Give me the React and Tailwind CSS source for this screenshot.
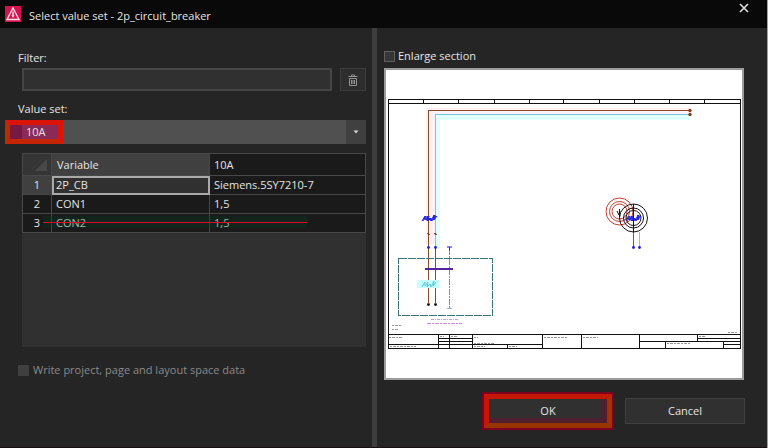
import { useState } from "react";

const variables = [
  { name: "2P_CB", value: "Siemens.5SY7210-7" },
  { name: "CON1", value: "1,5" },
  { name: "CON2", value: "1,5" },
];

const AppIcon = () => (
  <svg viewBox="0 0 16 16" className="h-4 w-4 shrink-0" aria-hidden="true">
    <rect width="16" height="16" fill="#d3134f" />
    <path d="M8 2 L14 13.5 H2 Z" fill="none" stroke="#fbd9e3" strokeWidth="1.4" />
    <path d="M8 5.5 V9.5" fill="none" stroke="#fbd9e3" strokeWidth="1.4" />
    <path d="M6.500 9 H9.500 L8 12 Z" fill="#fbd9e3" />
  </svg>
);

const TrashIcon = () => (
  <svg viewBox="0 0 12 12" className="h-3 w-3" fill="none" stroke="#929292" aria-hidden="true">
    <path d="M1.5 2.5 H10.5 M4.5 2.5 V1 H7.5 V2.5 M2.5 4.5 V11.5 H9.5 V4.5 M2.5 4.5 H9.5 M4.5 6 V10 M6 6 V10 M7.5 6 V10" />
  </svg>
);

const Contacts = ({ x, y, color }) => (
  <path
    d={`M${x} ${y + 3} l3 -5 l0 4 l3 -4 l-1 5 l3 -3 l1 3 l3 -6 l-1 5 l3 -4`}
    fill="none"
    stroke={color}
    strokeWidth="1"
  />
);

// Circuit plan, drawn in sheet coordinates
const Schematic = () => (
  <svg viewBox="386 70 356 308" className="block w-full" role="img" aria-label="Circuit diagram preview">
    <rect x="386" y="70" width="356" height="308" fill="#fff" />

    <path d="M426 108 H691 V115 H436 V244 H426 Z" fill="#fff0f8" />
    <path d="M436 115 H690 V120 H440 V248 H436 Z" fill="#e2ffff" />

    <g fill="none" stroke="#111" strokeWidth="1" shapeRendering="crispEdges">
      <path d="M388.500 99.500 H740.500 V348.500 H388.500 Z M388.500 103.500 H740.500" />
      <path d="M423.500 99 V103 M458.500 99 V103 M494.500 99 V103 M529.500 99 V103 M563.500 99 V103 M599.500 99 V103 M634.500 99 V103 M669.500 99 V103 M704.500 99 V103" />
      <path d="M388 334.500 H740 M388 344.500 H542 M438.500 334 V348 M449.500 334 V348 M472.500 334 V348 M542.500 334 V348 M581.500 334 V348 M639.500 334 V348 M507.500 344 V348" />
      <path d="M438 338.500 H472 M438 341.500 H472 M639 341.500 H740 M665.500 341 V348 M697.500 334 V341 M697 338.500 H740 M723.500 341 V348 M723 344.500 H740" />
    </g>

    <g fill="none" shapeRendering="crispEdges">
      <path d="M428.500 304 V110.500 H690" stroke="#8a4a22" />
      <path d="M435.500 248 V114.500 H690" stroke="#78c8dc" />
      <path d="M435.500 246 V304" stroke="#8a4a22" />
      <path d="M449.500 249 V308" stroke="#6ab42a" strokeDasharray="6 1 2 1" />
      <rect x="398.500" y="258.500" width="94" height="57" stroke="#37737a" strokeDasharray="8 1" />
      <path d="M425 268.500 H453" stroke="#5522a0" strokeWidth="2" />
      <path d="M633.500 230 V247" stroke="#8a5a22" />
      <path d="M639.500 232 V247" stroke="#c9a2ee" />
    </g>
    <g fill="#8a3a10">
      <circle cx="690" cy="110.500" r="1.700" />
      <circle cx="690" cy="114.500" r="1.700" />
      <path d="M427 233 h2 l1 2 h-2 z M434 233 h2 l1 2 h-2 z" />
    </g>
    <g fill="#1a1ae0">
      <circle cx="428.500" cy="247.500" r="1.400" />
      <circle cx="435.500" cy="247.500" r="1.400" />
      <path d="M447 246.500 h5 v1 h-2 v3 h-1 v-3 h-2 z" />
      <circle cx="633.500" cy="247.500" r="1.400" />
      <circle cx="639.500" cy="247.500" r="1.400" />
    </g>
    <g fill="#111">
      <circle cx="428.500" cy="304.500" r="1.400" />
      <circle cx="435.500" cy="304.500" r="1.400" />
    </g>
    <rect x="417" y="280" width="22" height="8" fill="#c8ffff" />
    <path d="M428.500 288 V304 M435.500 288 V304" stroke="#8a4a22" shapeRendering="crispEdges" />
    <Contacts x={422} y={218} color="#2222dd" />
    <Contacts x={423} y={218} color="#2222dd" />
    <Contacts x={422} y={284} color="#55c9ea" />
    <path d="M447 308.500 h5" stroke="#8fb0f5" />

    <g fill="none" stroke="#c43a30">
      <circle cx="619.500" cy="211.500" r="13.500" />
      <circle cx="619.500" cy="211.500" r="10" />
      <circle cx="619.500" cy="211.500" r="7.500" />
    </g>
    <path d="M617 211 l2 4 l1 -4 M619.500 209 v8" fill="none" stroke="#111" />
    <g fill="none" stroke="#161616">
      <circle cx="633.500" cy="218" r="14" />
      <circle cx="633.500" cy="218" r="10" />
      <circle cx="633.500" cy="218" r="7.500" />
      <path d="M633.500 204 V232" />
    </g>
    <Contacts x={626} y={218} color="#2222dd" />
    <Contacts x={627} y={218} color="#2222dd" />

    {/* Sheet annotations, too small to read */}
    <g fill="none" strokeWidth="1">
      <path d="M431 319.500 H458" stroke="#a9a0ff" strokeDasharray="3 1 1 1" />
      <path d="M427 323.500 H462" stroke="#d080e8" strokeDasharray="4 1 2 1" />
      <path d="M392 325.500 H401 M392 329.500 H398 M389 337.500 H403 M390 346.500 H416 M440 336.500 H444 M451 336.500 H458 M474 337.500 H478 M474 343.500 H494 M474 346.500 H485 M509 346.500 H517 M544 337.500 H567 M583 337.500 H598 M667 343.500 H690 M699 336.500 H706 M728 332.500 H738" stroke="#999" strokeDasharray="2 1 3 1" />
    </g>
  </svg>
);

const App = () => {
  const [filter, setFilter] = useState("");
  const [valueSet, setValueSet] = useState("10A");
  const [enlarge, setEnlarge] = useState(false);

  return (
    <div
      role="dialog"
      aria-labelledby="dialog-title"
      className="flex min-h-screen flex-col border-r border-[#a0a0a0] bg-[#252525] font-['Open_Sans','Noto_Sans',sans-serif] text-[11px] leading-4 text-[#e4e4e4]"
    >
      <header className="flex h-7 items-center gap-2 bg-[#090909] pr-[15px] pl-[5px]">
        <AppIcon />
        <h1 id="dialog-title" className="flex-1 pt-1">
          Select value set - 2p_circuit_breaker
        </h1>
        <button type="button" aria-label="Close" className="mb-3">
          <svg viewBox="0 0 16 16" className="h-4 w-4" stroke="#e4e4e4" strokeWidth="1.5" aria-hidden="true">
            <path d="M4 4 L12 12 M12 4 L4 12" />
          </svg>
        </button>
      </header>

      <main className="grid flex-1 grid-cols-[372fr_5px_390fr] border-b border-[#151113]">
        <section className="pr-1.5 pl-[18px]">
          <label htmlFor="filter" className="mt-[22px] block">
            Filter:
          </label>
          <div className="mt-0.5 flex gap-2 pl-1">
            <input
              id="filter"
              type="text"
              value={filter}
              onChange={(e) => setFilter(e.target.value)}
              className="h-[23px] min-w-0 flex-1 border-2 border-[#454545] bg-[#303030] px-1 outline-none"
            />
            <button
              type="button"
              aria-label="Clear filter"
              onClick={() => setFilter("")}
              className="flex h-[23px] w-[26px] items-center justify-center border border-[#3c3c3c] bg-[#2d2d2d]"
            >
              <TrashIcon />
            </button>
          </div>

          <label htmlFor="value-set" className="mt-2.5 block">
            Value set:
          </label>
          <div className="relative mt-[3px] ml-1 bg-[#505050]">
            <span className="pointer-events-none absolute inset-y-0 -left-[17px] w-[58px] border-[5px] border-[#dc1408] border-b-[#c42400] border-l-[#b82c00] bg-[#b0105a]/60" />
            <select
              id="value-set"
              value={valueSet}
              onChange={(e) => setValueSet(e.target.value)}
              className="relative block h-6 w-full appearance-none bg-transparent pl-1 outline-none"
            >
              <option>10A</option>
            </select>
            <span className="pointer-events-none absolute inset-y-0 right-0 flex w-5 items-center justify-center bg-[#404040]">
              <svg viewBox="0 0 6 4" className="h-1 w-1.5" fill="#d5d5d5" aria-hidden="true">
                <path d="M0.500 0.500 H5.500 L3 3.500 Z" />
              </svg>
            </span>
          </div>

          <div className="relative mt-[9px] ml-1 min-h-[194px] bg-[#303030]">
            <table className="w-full table-fixed border-collapse text-left">
              <colgroup>
                <col className="w-[29px]" />
                <col className="w-[158px]" />
                <col />
              </colgroup>
              <thead>
                <tr className="h-[22px]">
                  <th aria-label="Row" className="border border-[#484848] bg-[#353535] p-0">
                    <svg viewBox="0 0 12 12" className="ml-auto mr-1 h-3 w-3" fill="#484848" aria-hidden="true">
                      <path d="M12 0 V12 H0 Z" />
                    </svg>
                  </th>
                  <th className="border border-[#484848] bg-[#404040] p-0 pl-[5px] font-normal">Variable</th>
                  <th className="border border-[#484848] bg-[#1a1a1a] p-0 pl-1 font-normal">10A</th>
                </tr>
              </thead>
              <tbody>
                {variables.map((row, i) => (
                  <tr key={row.name} className="h-[19px] bg-[#1a1a1a]">
                    <th
                      className={
                        i === 0
                          ? "border border-[#484848] bg-[#404040] p-0 text-center font-normal"
                          : "border border-[#484848] p-0 text-center font-normal"
                      }
                    >
                      {i + 1}
                    </th>
                    <td
                      className={
                        i === 0
                          ? "border border-[#484848] bg-[#303030] p-0 pl-1 outline-2 -outline-offset-2 outline-[#aaa]"
                          : "border border-[#484848] p-0 pl-1"
                      }
                    >
                      {row.name}
                    </td>
                    <td className="border border-[#484848] p-0 pl-1">{row.value}</td>
                  </tr>
                ))}
              </tbody>
            </table>
            <span className="pointer-events-none absolute top-[63px] right-[59px] left-[21px] flex h-3 items-center bg-[#003c20]/30">
              <span className="h-px w-full bg-[#e00828]" />
            </span>
          </div>

          <label className="mt-[15px] flex items-center gap-1 text-[#8a8a8a]">
            <input type="checkbox" disabled className="h-[11px] w-[11px] appearance-none bg-[#404040]" />
            Write project, page and layout space data
          </label>
        </section>

        <div className="bg-[#3d3d3d]" />

        <section className="pr-[22px] pl-[7px]">
          <label className="mt-5 flex items-center gap-[3px]">
            <input
              type="checkbox"
              checked={enlarge}
              onChange={(e) => setEnlarge(e.target.checked)}
              className="h-[11px] w-[11px] appearance-none border border-[#606060] bg-[#363636] checked:bg-[#999]"
            />
            Enlarge section
          </label>
          <div className="mt-1 mr-px border-2 border-[#9c9c9c]">
            <Schematic />
          </div>
          <div className="mt-[18px] flex justify-end gap-[17px]">
            <div className="relative">
              <button type="button" className="h-[26px] w-[120px] border border-[#444] bg-[#303030]">
                OK
              </button>
              <span className="pointer-events-none absolute -inset-1 border-[5px] border-[#c41805] border-r-[#a83000] border-b-[#983400] shadow-[inset_-5px_-5px_0_#80083066] outline-2 outline-[#7c0020]" />
            </div>
            <button type="button" className="h-[26px] w-[120px] border border-[#404040] bg-[#303030]">
              Cancel
            </button>
          </div>
        </section>
      </main>
    </div>
  );
};

export default App;
